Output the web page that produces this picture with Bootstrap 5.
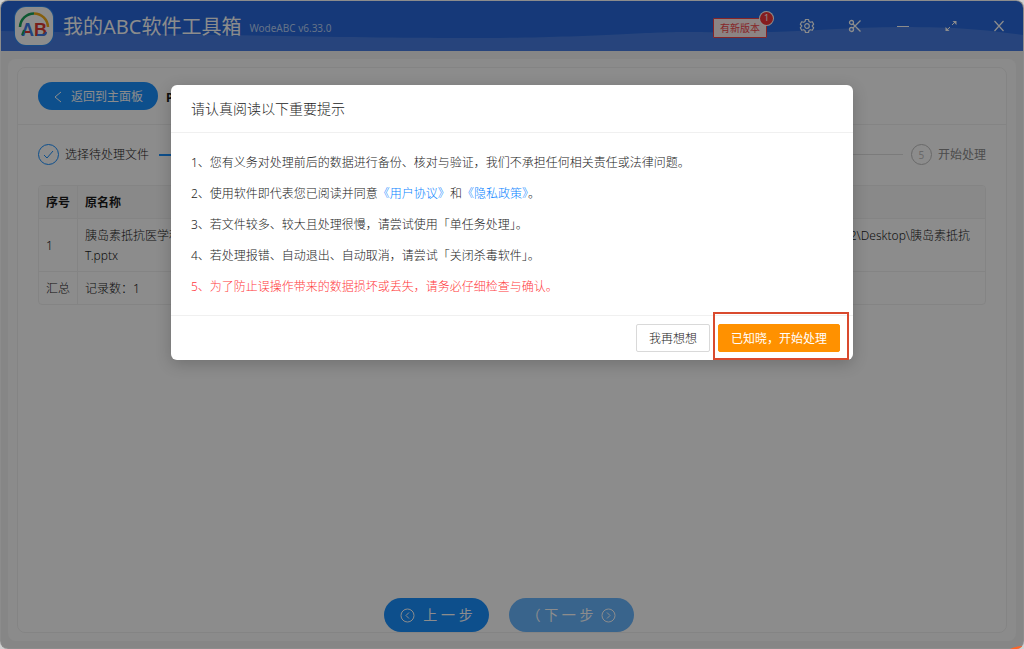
<!DOCTYPE html>
<html lang="zh-CN">
<head>
<meta charset="utf-8">
<meta name="viewport" content="width=device-width, initial-scale=1">
<title>我的ABC软件工具箱</title>
<link href="https://cdn.jsdelivr.net/npm/bootstrap@5.3.0/dist/css/bootstrap.min.css" rel="stylesheet">
<style>
  body { font-family: "Noto Sans", "Noto Sans CJK SC", sans-serif; font-size: 12px; line-height: 20px; color: #1a1a1a; background: #d0d0d0; font-weight: 300; }
  .app-window { min-height: 100vh; border: 1px solid #fff; border-radius: 8px; background: #f5f5f5; overflow: hidden; }
  .title-bar { height: 50px; background: #2869dc; padding-left: 12px; }
  .title-bar .wave { position: absolute; top: 0; left: 0; width: 100%; height: 100%; }
  .app-logo { width: 42px; height: 42px; }
  .app-name { font-size: 20px; line-height: 28px; color: #fff; padding-top: 2px; font-weight: 400; }
  .app-version { font-size: 10px; color: #b9cff7; padding-top: 4px; font-weight: 400; }
  .version-tag { font-size: 10px; line-height: 18px; color: #f5444a; background: #fff1f0; border: 1px solid #f5444a; border-radius: 1px; padding: 0 6px; margin-top: 4px; font-weight: 400; }
  .version-count { top: -7px; right: -7px; width: 13px; height: 13px; border-radius: 50%; background: #f5353a; color: #fff; font-size: 9px; line-height: 12px; box-shadow: 0 0 0 1px #fff; }
  .win-btn { width: 48px; height: 30px; color: #fff; border: 0; background: none; padding: 0; }
  .win-btn svg { display: block; margin: auto; }
  .outer-panel { margin: 8px 7px 7px; padding: 8px 9px; background: #fdfdfd; border-radius: 8px; }
  .inner-panel { border: 1px solid #f0f0f0; border-radius: 8px; background: #fff; }
  .panel-head { padding: 14px 20px; border-bottom: 1px solid #f0f0f0; }
  .blue-pill { background: #1890ff; color: #fff; border: 0; border-radius: 17px; }
  .back-btn { height: 28px; padding: 2px 13px 0; width: 120px; }
  .page-name { font-size: 12px; font-weight: 700; padding-top: 4px; }
  .steps-row { padding: 19px 20px 20px; }
  .step-dot { width: 21px; height: 21px; border: 1px solid #1890ff; border-radius: 50%; color: #1890ff; flex: none; font-size: 10px; }
  .step-wait { color: #8c8c8c; font-weight: 400; }
  .step-wait .step-dot { border-color: #bfbfbf; color: #bfbfbf; margin-right: 6px; }
  .step-name { margin: 0 10px 0 6px; }
  .step-line { height: 1px; background: #e0e0e0; }
  .step-line.done { background: #1890ff; height: 2px; }
  .file-grid { margin: 0 20px; }
  .file-grid table { width: 100%; table-layout: fixed; border-collapse: separate; border-spacing: 0; border: 1px solid #f0f0f0; border-radius: 4px; overflow: hidden; }
  .file-grid th, .file-grid td { padding: 7px 6px 5px 7px; border-bottom: 1px solid #f0f0f0; border-right: 1px solid #f0f0f0; line-height: 20px; }
  .file-grid th { background: #fafafa; font-weight: 700; }
  .file-grid tr > :last-child { border-right: 0; }
  .file-grid tbody tr:last-child td { border-bottom: 0; }
  .file-grid .col-index { width: 39px; }
  .file-grid .path-cell { padding-right: 15px; text-align: right; }
  .nav-pill { height: 34px; font-size: 14px; }
  .nav-pill.prev { width: 105px; }
  .nav-pill.faded { opacity: .65; width: 125px; }
  .nav-row { gap: 20px; margin-right: 6px; }
  .dim-layer { background: rgba(0,0,0,.45); overflow: hidden; border-radius: 8px; }
  .notice { max-width: 682px; margin: 85px auto 0; }
  .notice .modal-content { border: 0; border-radius: 6px; box-shadow: 0 4px 16px rgba(0,0,0,.2); color: #222; }
  .notice .modal-header { padding: 12px 20px; border-bottom: 1px solid #f0f0f0; height: 48px; }
  .notice .modal-title { font-size: 14px; line-height: 22px; font-weight: 300; }
  .notice .modal-body { padding: 14px 20px 13px; }
  .notice .modal-body p { margin: 0; line-height: 31px; }
  .notice .modal-body a { color: #0a84ff; text-decoration: none; }
  .notice .warn { color: #ff3a3d; }
  .notice .modal-footer { border-top: 1px solid #f0f0f0; padding: 0 4px 0 0; height: 45px; }
  .notice-btn { height: 28px; font-size: 12px; line-height: 20px; padding: 2px 12px 0; border: 1px solid #d9d9d9; border-radius: 2px; background: #fff; color: #222; font-weight: 300; }
  .notice .modal-footer .notice-btn.think { margin: 0 3px 0 0; }
  .notice-btn.go { background: #ff9100; border-color: #ff9100; color: #fff; font-weight: 400; }
  .notice .modal-footer .marked { border: 2px solid #d94a2e; padding: 10px 7px 6px 3px; margin: -4px 0 0; }
  .desk-corner { right: 0; bottom: 0; }
</style>
</head>
<body>
<div class="app-window d-flex flex-column">
  <header class="title-bar position-relative">
    <svg class="wave" viewBox="0 0 1022 50" preserveAspectRatio="none" aria-hidden="true"><path d="M0 30C180 33 350 37 460 37C600 37 640 30 700 31C780 34 830 26 900 26C960 26 985 29 1022 34V50H0Z" fill="#477de2"/></svg>
    <div class="position-relative d-flex align-items-center h-100">
    <svg class="app-logo" viewBox="0 0 42 42" role="img" aria-label="AB">
      <rect x="1" y="1" width="40" height="40" rx="12" fill="#2f8af5"/>
      <rect x="2" y="2" width="38" height="38" rx="11" fill="#fff"/>
      <g fill="none" stroke-width="2.500"><path d="M7 22A14 14 0 0 1 21 8.500" stroke="#18a05a"/><path d="M21 8.500A14 14 0 0 1 35 22" stroke="#f2ab19"/></g>
      <text x="8" y="31" font-family="Liberation Sans" font-size="18" font-weight="700" fill="#3e7be8">A</text>
      <text x="21" y="31" font-family="Liberation Sans" font-size="18" font-weight="700" fill="#dc3830">B</text>
      <path d="M24 30H30Q33 30 33 27" stroke="#3e7be8" stroke-width="2" fill="none"/><path d="M12 27H17" stroke="#dc3830" stroke-width="2"/><path d="M9 30L11 25" stroke="#18a05a" stroke-width="2"/>
    </svg>
    <span class="app-name ms-2">我的ABC软件工具箱</span>
    <span class="app-version ms-2">WodeABC v6.33.0</span>
    <a href="#" class="version-tag position-relative ms-auto me-3 text-decoration-none">有新版本<span class="version-count position-absolute text-center">1</span></a>
    <div class="d-flex">
      <button class="win-btn" aria-label="设置"><svg width="16" height="16" viewBox="0 0 16 16" fill="none" stroke="currentColor" stroke-width="1.200" stroke-linejoin="round"><path d="M6.500 1.500h3l.5 2 1.300.8 2-.6 1.400 2.500L13.200 8l1.500 1.800-1.400 2.500-2-.6-1.300.8-.5 2h-3l-.5-2-1.300-.8-2 .6-1.400-2.500L2.800 8 1.300 6.200l1.400-2.500 2 .6L6 3.500z"/><circle cx="8" cy="8" r="2.300"/></svg></button>
      <button class="win-btn" aria-label="截图"><svg width="14" height="14" viewBox="0 0 14 14" fill="none" stroke="currentColor" stroke-width="1.300"><circle cx="3.500" cy="3.500" r="2"/><circle cx="3.500" cy="10.500" r="2"/><path d="M5 5l7.500 7.500M5 9l7.500-7.500"/></svg></button>
      <button class="win-btn" aria-label="最小化"><svg width="14" height="14" viewBox="0 0 14 14" stroke="currentColor"><path d="M1 7.500h12"/></svg></button>
      <button class="win-btn" aria-label="最大化"><svg width="14" height="14" viewBox="0 0 14 14" fill="currentColor" stroke="currentColor"><path d="M8 6l3-3M6 8l-3 3" fill="none"/><path d="M8.500 2h4v4zM1.500 8v4h4z" stroke="none"/></svg></button>
      <button class="win-btn" aria-label="关闭"><svg width="12" height="12" viewBox="0 0 12 12" stroke="currentColor" stroke-width="1.200"><path d="M1.500 1l9 10M10.500 1l-9 10"/></svg></button>
    </div>
    </div>
  </header>

  <main class="outer-panel flex-grow-1 d-flex flex-column">
    <section class="inner-panel flex-grow-1 d-flex flex-column">
      <div class="panel-head d-flex align-items-center gap-2">
        <button class="blue-pill back-btn d-flex align-items-center"><svg class="me-2" width="12" height="12" viewBox="0 0 12 12" fill="none" stroke="currentColor"><path d="M10 1L4 6l6 5"/></svg>返回到主面板</button>
        <h1 class="page-name mb-0">PPT</h1>
      </div>
      <div class="steps-row d-flex align-items-center">
        <span class="step-dot d-flex align-items-center justify-content-center"><svg width="11" height="11" viewBox="0 0 11 11" fill="none" stroke="currentColor"><path d="M1 6l3 3 6-7"/></svg></span>
        <span class="step-name">选择待处理文件</span>
        <span class="step-line done flex-grow-1"></span>
        <span class="step-line flex-grow-1 me-2"></span>
        <span class="step-wait d-flex align-items-center"><span class="step-dot d-flex align-items-center justify-content-center">5</span>开始处理</span>
      </div>
      <div class="file-grid">
        <table>
          <colgroup><col class="col-index"><col><col></colgroup>
          <thead><tr><th>序号</th><th>原名称</th><th></th></tr></thead>
          <tbody>
            <tr><td>1</td><td>胰岛素抵抗医学科<br>T.pptx</td><td class="path-cell">2\Desktop\胰岛素抵抗<br>&nbsp;</td></tr>
            <tr><td>汇总</td><td>记录数：1</td><td></td></tr>
          </tbody>
        </table>
      </div>
      <div class="nav-row mt-auto d-flex justify-content-center pt-4">
        <button class="blue-pill nav-pill prev d-flex align-items-center justify-content-center gap-2 px-0"><svg width="15" height="15" viewBox="0 0 15 15" fill="none" stroke="currentColor"><circle cx="7.500" cy="7.500" r="6.500"/><path d="M9 4.500l-3 3 3 3"/></svg>上 一 步</button>
        <button class="blue-pill nav-pill faded d-flex align-items-center justify-content-center gap-2 px-0" disabled><span>（ 下 一 步</span><svg width="15" height="15" viewBox="0 0 15 15" fill="none" stroke="currentColor"><circle cx="7.500" cy="7.500" r="6.500"/><path d="M6 4.500l3 3-3 3"/></svg></button>
      </div>
    </section>
  </main>
</div>

<div class="dim-layer position-absolute top-0 start-0 w-100 h-100">
  <div class="notice" role="dialog" aria-modal="true" aria-labelledby="notice-title">
    <div class="modal-content bg-white">
      <div class="modal-header"><h2 class="modal-title" id="notice-title">请认真阅读以下重要提示</h2></div>
      <div class="modal-body">
        <p>1、您有义务对处理前后的数据进行备份、核对与验证，我们不承担任何相关责任或法律问题。</p>
        <p>2、使用软件即代表您已阅读并同意<a href="#">《用户协议》</a>和<a href="#">《隐私政策》</a>。</p>
        <p>3、若文件较多、较大且处理很慢，请尝试使用「单任务处理」。</p>
        <p>4、若处理报错、自动退出、自动取消，请尝试「关闭杀毒软件」。</p>
        <p class="warn">5、为了防止误操作带来的数据损坏或丢失，请务必仔细检查与确认。</p>
      </div>
      <div class="modal-footer flex-nowrap justify-content-end">
        <button class="notice-btn think">我再想想</button>
        <div class="marked"><button class="notice-btn go d-block">已知晓，开始处理</button></div>
      </div>
    </div>
  </div>
  <svg class="desk-corner position-absolute" width="14" height="3" viewBox="0 0 14 3" aria-hidden="true"><path d="M0 3Q6 0 14 0V3Z" fill="#ff6426"/></svg>
</div>
<script src="https://cdn.jsdelivr.net/npm/bootstrap@5.3.0/dist/js/bootstrap.bundle.min.js"></script>
</body>
</html>
